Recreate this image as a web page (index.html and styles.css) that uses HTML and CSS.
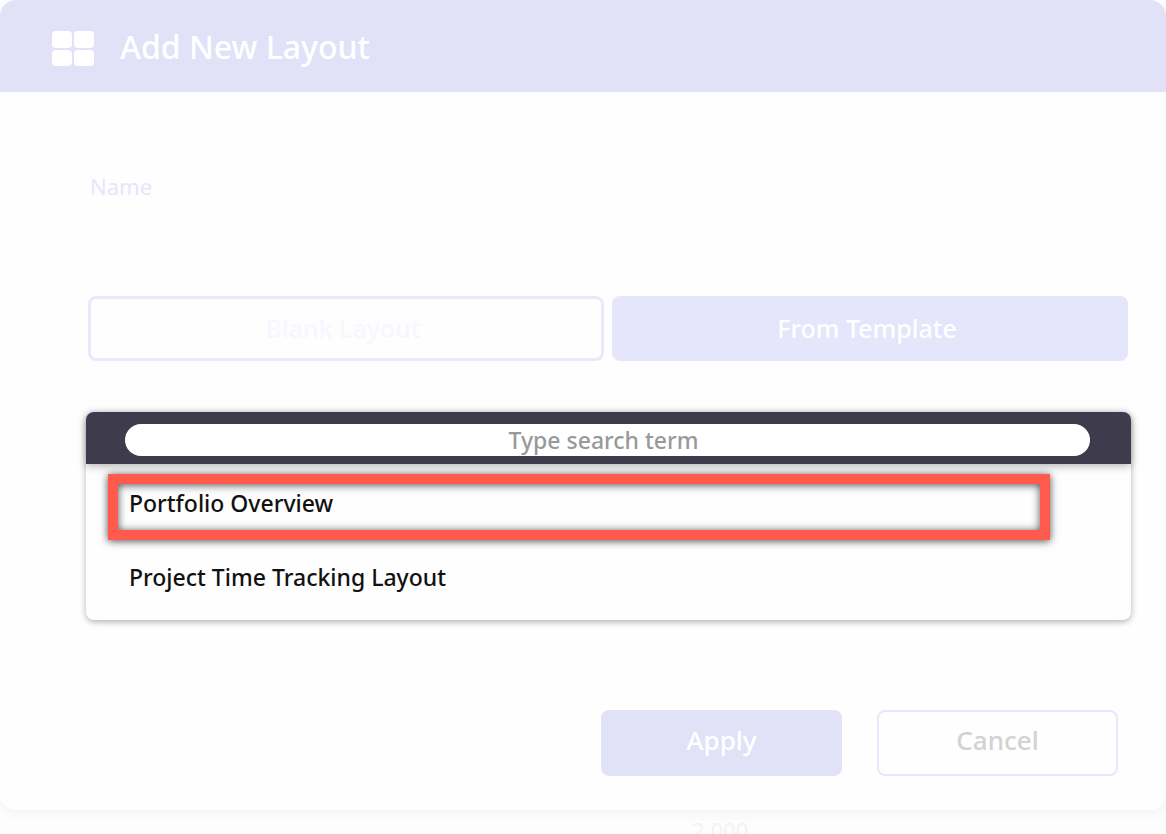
FILE: index.html
```html
<!DOCTYPE html>
<html lang="en">
<head>
    <meta charset="UTF-8">
    <meta name="viewport" content="width=device-width, initial-scale=1.0">
    <title>Add New Layout</title>
    <link rel="stylesheet" href="styles.css">
</head>
<body>
    <form class="modal">
        <header class="modal-header">
            <svg class="modal-icon" width="42" height="36" viewBox="0 0 42 36" fill="#fff" aria-hidden="true">
                <rect x="0" y="0" width="20" height="17" rx="4"/>
                <rect x="22" y="0" width="20" height="17" rx="4"/>
                <rect x="0" y="19" width="20" height="16" rx="4"/>
                <rect x="22" y="19" width="20" height="16" rx="4"/>
            </svg>
            <h1>Add New Layout</h1>
        </header>

        <div class="modal-body">
            <div class="field">
                <label for="name">Name</label>
                <input type="text" id="name">
            </div>

            <div class="tabs">
                <button type="button" class="tab">Blank Layout</button>
                <button type="button" class="tab active">From Template</button>
            </div>

            <div class="dropdown">
                <div class="search">
                    <input type="text" placeholder="Type search term" aria-label="Type search term">
                </div>
                <ul class="options">
                    <li class="selected"><button type="button">Portfolio Overview</button></li>
                    <li><button type="button">Project Time Tracking Layout</button></li>
                </ul>
            </div>
        </div>

        <footer class="modal-footer">
            <button type="submit" class="btn btn-apply">Apply</button>
            <button type="button" class="btn btn-cancel">Cancel</button>
        </footer>
    </form>

    <div class="backdrop-value">2,000</div>
</body>
</html>
```

FILE: styles.css
```css
* {
    box-sizing: border-box;
}

body {
    margin: 0;
    height: 100vh;
    overflow: hidden;
    background-color: #fdfdfd;
    font-family: "Noto Sans", sans-serif;
}

button, input {
    font-family: inherit;
}

button {
    cursor: pointer;
}

.modal {
    background-color: #fefefe;
    border-radius: 16px;
    box-shadow: 0 4px 12px rgba(0, 0, 0, 0.04);
    overflow: hidden;
}

.modal-header {
    display: flex;
    align-items: center;
    gap: 26px;
    height: 92px;
    padding: 2px 52px 0;
    background-color: #e1e2f8;
    color: #fff;
}

.modal-icon {
    margin-top: 4px;
}

.modal-header h1 {
    margin: 0;
    font-size: 32px;
    font-weight: 500;
    line-height: 44px;
}

.modal-body {
    padding: 80px 35px 0 86px;
}

.field {
    display: flex;
    flex-direction: column;
    padding: 0 4px;
}

.field label {
    font-size: 22px;
    line-height: 28px;
    color: #e6e6fc;
}

.field input {
    height: 64px;
    border: none;
    outline: none;
    background: none;
    font-size: 22px;
}

.tabs {
    display: flex;
    gap: 8px;
    margin-top: 32px;
    padding: 0 3px 0 2px;
}

.tab {
    flex: 1;
    height: 65px;
    padding: 0 6px 2px 0;
    border: 3px solid #e9e9fc;
    border-radius: 8px;
    background-color: #fefefe;
    color: #f7f7fe;
    font-size: 25px;
    font-weight: 500;
}

.tab.active {
    border-color: #e5e5fb;
    background-color: #e5e5fb;
    color: #fff;
}

.dropdown {
    margin-top: 51px;
    border-radius: 8px;
    background-color: #fefefe;
    box-shadow: 0 2px 6px rgba(0, 0, 0, 0.3);
}

.search {
    display: flex;
    padding: 12px 41px 8px 39px;
    border-radius: 8px 8px 0 0;
    background-color: #3e3b4c;
    box-shadow: 0 2px 8px rgba(0, 0, 0, 0.3);
}

.search input {
    flex: 1;
    height: 32px;
    padding: 0 8px 0 0;
    border: none;
    border-radius: 16px;
    background-color: #fff;
    font-size: 23px;
    font-weight: 500;
    text-align: center;
}

.search input::placeholder {
    color: #999;
}

.options {
    margin: 0;
    padding: 3px 0 5px;
    list-style: none;
}

.options li {
    position: relative;
}

.options button {
    width: 100%;
    height: 74px;
    padding: 0 43px 2px;
    border: none;
    background: none;
    color: #111;
    font-size: 23px;
    font-weight: 500;
    text-align: left;
}

.options .selected::after {
    content: "";
    position: absolute;
    top: 7px;
    right: 81px;
    bottom: 1px;
    left: 22px;
    border: 10px solid #ff5a4c;
    box-shadow: 0 1px 8px rgba(0, 0, 0, 0.7), inset 0 1px 8px rgba(0, 0, 0, 0.7);
    pointer-events: none;
}

.modal-footer {
    display: flex;
    justify-content: flex-end;
    gap: 35px;
    padding: 90px 48px 34px;
}

.btn {
    width: 241px;
    height: 66px;
    padding: 0 0 6px;
    border: 2px solid #e8e8fd;
    border-radius: 8px;
    font-size: 26px;
    font-weight: 500;
}

.btn-apply {
    border-color: #e1e2f8;
    background-color: #e1e2f8;
    color: #fff;
}

.btn-cancel {
    background-color: #fefefe;
    color: #d2d2d2;
}

.backdrop-value {
    margin-top: 4px;
    padding-left: 692px;
    color: #f3f3f3;
    font-size: 22px;
    line-height: 32px;
}
```
